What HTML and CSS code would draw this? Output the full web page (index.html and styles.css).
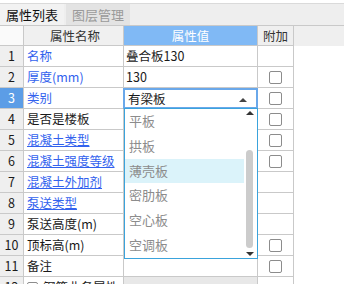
FILE: index.html
```html
<!DOCTYPE html>
<html lang="zh-CN">
<head>
    <meta charset="UTF-8">
    <title>属性列表</title>
    <link rel="stylesheet" href="styles.css">
</head>
<body>
    <div class="tabs">
        <div class="tab active">属性列表</div>
        <div class="tab">图层管理</div>
    </div>

    <div class="grid">
        <div class="row head">
            <div class="num"></div>
            <div class="name">属性名称</div>
            <div class="val">属性值</div>
            <div class="add">附加</div>
        </div>
        <div class="row">
            <div class="num">1</div>
            <div class="name link">名称</div>
            <div class="val">叠合板130</div>
            <div class="add"></div>
        </div>
        <div class="row">
            <div class="num">2</div>
            <div class="name link">厚度(mm)</div>
            <div class="val">130</div>
            <div class="add"><span class="check"></span></div>
        </div>
        <div class="row selected">
            <div class="num">3</div>
            <div class="name link">类别</div>
            <div class="val select">有梁板<span class="arrow"></span></div>
            <div class="add"><span class="check"></span></div>
        </div>
        <div class="row">
            <div class="num">4</div>
            <div class="name">是否是楼板</div>
            <div class="val"></div>
            <div class="add"><span class="check"></span></div>
        </div>
        <div class="row">
            <div class="num">5</div>
            <div class="name link under">混凝土类型</div>
            <div class="val"></div>
            <div class="add"><span class="check"></span></div>
        </div>
        <div class="row">
            <div class="num">6</div>
            <div class="name link under">混凝土强度等级</div>
            <div class="val"></div>
            <div class="add"><span class="check"></span></div>
        </div>
        <div class="row">
            <div class="num">7</div>
            <div class="name link under">混凝土外加剂</div>
            <div class="val"></div>
            <div class="add"></div>
        </div>
        <div class="row">
            <div class="num">8</div>
            <div class="name link under">泵送类型</div>
            <div class="val"></div>
            <div class="add"></div>
        </div>
        <div class="row">
            <div class="num">9</div>
            <div class="name">泵送高度(m)</div>
            <div class="val"></div>
            <div class="add"></div>
        </div>
        <div class="row">
            <div class="num">10</div>
            <div class="name">顶标高(m)</div>
            <div class="val"></div>
            <div class="add"><span class="check"></span></div>
        </div>
        <div class="row">
            <div class="num">11</div>
            <div class="name">备注</div>
            <div class="val"></div>
            <div class="add"><span class="check"></span></div>
        </div>
        <div class="row group">
            <div class="num">12</div>
            <div class="name"><span class="expand"></span>钢筋业务属性</div>
            <div class="val"></div>
            <div class="add"></div>
        </div>

        <div class="dropdown">
            <div class="options">
                <div class="option">平板</div>
                <div class="option">拱板</div>
                <div class="option hover">薄壳板</div>
                <div class="option">密肋板</div>
                <div class="option">空心板</div>
                <div class="option">空调板</div>
            </div>
            <div class="scrollbar">
                <span class="up"></span>
                <span class="thumb"></span>
                <span class="down"></span>
            </div>
        </div>
    </div>
</body>
</html>
```

FILE: styles.css
```css
body {
    margin: 0;
    width: 344px;
    height: 284px;
    overflow: hidden;
    background: #ffffff;
    font-family: "Noto Sans CJK SC", "Microsoft YaHei", sans-serif;
    font-size: 12.5px;
    color: #1a1a1a;
}

.tabs {
    display: flex;
    margin-top: 3px;
    height: 21px;
    background: #eeeeee;
    border-top: 1px solid #dadada;
    border-bottom: 1px solid #c9c9c9;
}

.tab {
    width: 64px;
    margin-right: 2px;
    line-height: 21px;
    text-align: center;
    background: #e3e3e3;
    color: #9a9a9a;
    font-size: 13px;
}

.tab.active {
    background: #f2f2f2;
    color: #111111;
}

.grid {
    position: relative;
}

.row {
    display: grid;
    grid-template-columns: 24px 100px 134px 36px;
    height: 21px;
}

.row > div {
    box-sizing: border-box;
    height: 21px;
    line-height: 20px;
    border-right: 1px solid #c9c9c9;
    border-bottom: 1px solid #c9c9c9;
    white-space: nowrap;
    overflow: hidden;
}

.row.head {
    height: 20px;
    background: #efefef;
}

.row.head > div {
    height: 20px;
    line-height: 19px;
    text-align: center;
    color: #333333;
}

.row.head .num {
    background: #fafafa;
}

.row.head .name {
    background: #f0f0f0;
}

.row.head .val {
    background: #80b9f5;
    color: #ffffff;
    padding: 0;
}

.num {
    background: #efefef;
    text-align: center;
}

.name {
    padding-left: 3px;
}

.link {
    color: #3262ee;
}

.under {
    text-decoration: underline;
    text-underline-offset: 1px;
}

.val {
    padding-left: 2px;
}

.add {
    display: flex;
    align-items: center;
    justify-content: center;
}

.check {
    width: 13px;
    height: 13px;
    box-sizing: border-box;
    border: 1px solid #8c8c8c;
    border-radius: 2px;
    background: #ffffff;
}

.selected .num {
    background: #5c9de6;
    color: #ffffff;
}

.select {
    position: relative;
    border: 2px solid #6aa8ea !important;
    margin-left: -1px;
    padding-left: 3px;
    line-height: 17px !important;
}

.arrow {
    position: absolute;
    right: 9px;
    top: 8px;
    border-left: 4px solid transparent;
    border-right: 4px solid transparent;
    border-bottom: 4px solid #444444;
}

.group .val {
    background: #e8e8e8;
}

.expand {
    display: inline-block;
    width: 11px;
    height: 11px;
    box-sizing: border-box;
    border: 1px solid #8c8c8c;
    border-radius: 2px;
    margin-right: 5px;
    vertical-align: -1px;
}

.dropdown {
    position: absolute;
    left: 124px;
    top: 82px;
    width: 134px;
    height: 151px;
    box-sizing: border-box;
    border: 1px solid #3aa3dc;
    background: #ffffff;
    display: flex;
}

.options {
    flex: 1;
}

.option {
    height: 24.8px;
    line-height: 24px;
    padding-left: 4px;
    color: #8c8c8c;
    font-size: 13px;
}

.option.hover {
    background: #dbf3fa;
}

.scrollbar {
    position: relative;
    width: 13px;
}

.up,
.down {
    position: absolute;
    left: 2px;
    border-left: 4px solid transparent;
    border-right: 4px solid transparent;
}

.up {
    top: 2px;
    border-bottom: 4px solid #333333;
}

.down {
    bottom: 2px;
    border-top: 4px solid #333333;
}

.thumb {
    position: absolute;
    left: 2px;
    top: 41px;
    width: 7px;
    height: 98px;
    border-radius: 4px;
    background: #cccccc;
}
```
